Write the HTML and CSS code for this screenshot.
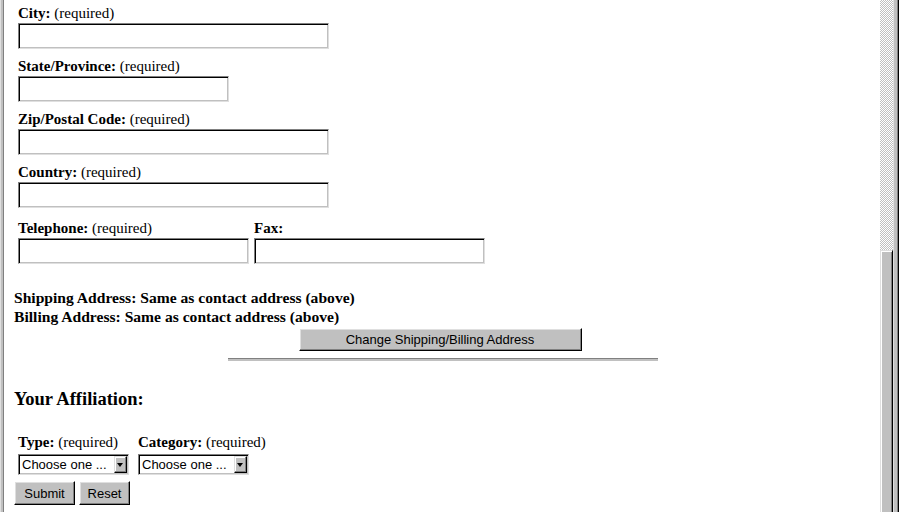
FILE: index.html
```html
<!DOCTYPE html>
<html>
<head>
<meta charset="utf-8">
<title>Registration</title>
<link rel="stylesheet" href="styles.css">
</head>
<body>
<div class="window">
  <div class="frame-left"></div>
  <main class="content">
    <form class="form">
      <div class="field">
        <label class="label"><b>City:</b> (required)</label>
        <input class="text w310" type="text">
      </div>
      <div class="field">
        <label class="label"><b>State/Province:</b> (required)</label>
        <input class="text w210" type="text">
      </div>
      <div class="field">
        <label class="label"><b>Zip/Postal Code:</b> (required)</label>
        <input class="text w310" type="text">
      </div>
      <div class="field">
        <label class="label"><b>Country:</b> (required)</label>
        <input class="text w310" type="text">
      </div>
      <div class="row tel-row">
        <div class="field">
          <label class="label"><b>Telephone:</b> (required)</label>
          <input class="text w230" type="text">
        </div>
        <div class="field">
          <label class="label"><b>Fax:</b></label>
          <input class="text w230" type="text">
        </div>
      </div>
      <div class="addr">
        <div>Shipping Address: Same as contact address (above)</div>
        <div>Billing Address: Same as contact address (above)</div>
      </div>
      <div class="center">
        <button type="button" class="btn change">Change Shipping/Billing Address</button>
      </div>
      <hr class="rule">
      <h3 class="heading">Your Affiliation:</h3>
      <div class="row sel-row">
        <div class="field">
          <label class="label"><b>Type:</b> (required)</label>
          <div class="select-wrap">
            <select class="select"><option>Choose one ...</option></select>
            <span class="arrow"></span>
          </div>
        </div>
        <div class="field">
          <label class="label"><b>Category:</b> (required)</label>
          <div class="select-wrap">
            <select class="select"><option>Choose one ...</option></select>
            <span class="arrow"></span>
          </div>
        </div>
      </div>
      <div class="actions">
        <button type="submit" class="btn submit">Submit</button>
        <button type="reset" class="btn reset">Reset</button>
      </div>
    </form>
  </main>
  <div class="scrollbar">
    <div class="track"></div>
    <div class="thumb"></div>
  </div>
  <div class="frame-right"></div>
</div>
</body>
</html>
```

FILE: styles.css
```css
html, body {
  margin: 0;
  padding: 0;
  background: #fff;
}
body {
  font-family: "Liberation Serif", "Times New Roman", serif;
  font-size: 15px;
  color: #000;
}
.window {
  display: flex;
  width: 899px;
  height: 512px;
  overflow: hidden;
}
.frame-left {
  width: 4px;
  flex: none;
  box-sizing: border-box;
  border-left: 1px solid #dfdfdf;
  border-right: 1px solid #808080;
  background: #c0c0c0;
}
.content {
  flex: 1;
  padding: 4px 0 0 10px;
  box-sizing: border-box;
}
.form {
  margin: 0;
}
.field {
  padding-left: 4px;
  margin-bottom: 8px;
}
.label {
  display: block;
  line-height: 16px;
  height: 16px;
  padding-top: 1px;
  margin-bottom: 2px;
  white-space: nowrap;
}
.text {
  display: block;
  box-sizing: border-box;
  height: 26px;
  margin: 0;
  padding: 0 3px;
  background: #fff;
  border: 1px solid;
  border-color: #808080 #dfdfdf #dfdfdf #808080;
  box-shadow: inset 1px 1px 0 #000, inset -1px -1px 0 #c0c0c0;
  outline: none;
}
.w310 { width: 311px; }
.w210 { width: 211px; }
.w230 { width: 231px; }
.row {
  display: flex;
}
.tel-row {
  margin-top: 12px;
  gap: 1px;
}
.tel-row .field {
  margin-bottom: 0;
}
.tel-row .label {
  padding-top: 0;
  margin-bottom: 2px;
}
.addr {
  margin-top: 24px;
  font-size: 15.6px;
  font-weight: bold;
  line-height: 19px;
}
.center {
  display: flex;
  justify-content: center;
  margin: 2px 0 0 -14px;
}
.btn {
  font-family: "Liberation Sans", Arial, sans-serif;
  font-size: 13px;
  color: #000;
  background: #c0c0c0;
  border: 1px solid;
  border-color: #fff #000 #000 #fff;
  box-shadow: inset -1px -1px 0 #808080, inset 1px 1px 0 #dfdfdf;
  box-sizing: border-box;
  margin: 0;
  padding: 0;
}
.change {
  width: 283px;
  height: 23px;
}
.rule {
  width: 430px;
  height: 0;
  margin: 7px 0 0 214px;
  border: 0;
  border-top: 1px solid #808080;
  border-bottom: 2px solid #c0c0c0;
}
.heading {
  margin: 29px 0 0;
  font-size: 18.5px;
  line-height: 19px;
  font-weight: bold;
}
.sel-row {
  margin-top: 25px;
  gap: 5px;
}
.sel-row .field {
  margin-bottom: 0;
}
.sel-row .label {
  padding-top: 0;
  margin-bottom: 4px;
}
.select-wrap {
  position: relative;
  width: 111px;
  height: 21px;
}
.select {
  appearance: none;
  -webkit-appearance: none;
  display: block;
  width: 111px;
  height: 21px;
  box-sizing: border-box;
  margin: 0;
  padding: 0 0 0 3px;
  font-family: "Liberation Sans", Arial, sans-serif;
  font-size: 13px;
  color: #000;
  background: #fff;
  border: 1px solid;
  border-color: #808080 #dfdfdf #dfdfdf #808080;
  box-shadow: inset 1px 1px 0 #000, inset -1px -1px 0 #c0c0c0;
  border-radius: 0;
  outline: none;
}
.arrow {
  position: absolute;
  top: 2px;
  right: 2px;
  width: 13px;
  height: 17px;
  box-sizing: border-box;
  background: #c0c0c0;
  border: 1px solid;
  border-color: #dfdfdf #000 #000 #dfdfdf;
  box-shadow: inset -1px -1px 0 #808080, inset 1px 1px 0 #fff;
  pointer-events: none;
}
.arrow::after {
  content: "";
  position: absolute;
  left: 2px;
  top: 6px;
  border-left: 3.5px solid transparent;
  border-right: 3.5px solid transparent;
  border-top: 4px solid #000;
}
.actions {
  display: flex;
  gap: 4px;
  margin-top: 6px;
}
.submit {
  width: 61px;
  height: 24px;
}
.reset {
  width: 51px;
  height: 24px;
}
.scrollbar {
  position: relative;
  width: 13px;
  flex: none;
}
.track {
  height: 100%;
  background-color: #fff;
  background-image: repeating-conic-gradient(#c0c0c0 0 25%, #fff 0 50%);
  background-size: 2px 2px;
}
.thumb {
  position: absolute;
  left: 0;
  right: 0;
  top: 250px;
  bottom: 0;
  box-sizing: border-box;
  background: #c0c0c0;
  border-left: 1px solid #dfdfdf;
  border-top: 1px solid #dfdfdf;
  border-right: 1px solid #000;
  box-shadow: inset 1px 1px 0 #fff, inset -1px 0 0 #808080;
}
.frame-right {
  width: 6px;
  flex: none;
  box-sizing: border-box;
  background: #c0c0c0;
  border-left: 1px solid #dfdfdf;
  border-right: 1px solid #000;
  box-shadow: inset -1px 0 0 #808080;
}
```
